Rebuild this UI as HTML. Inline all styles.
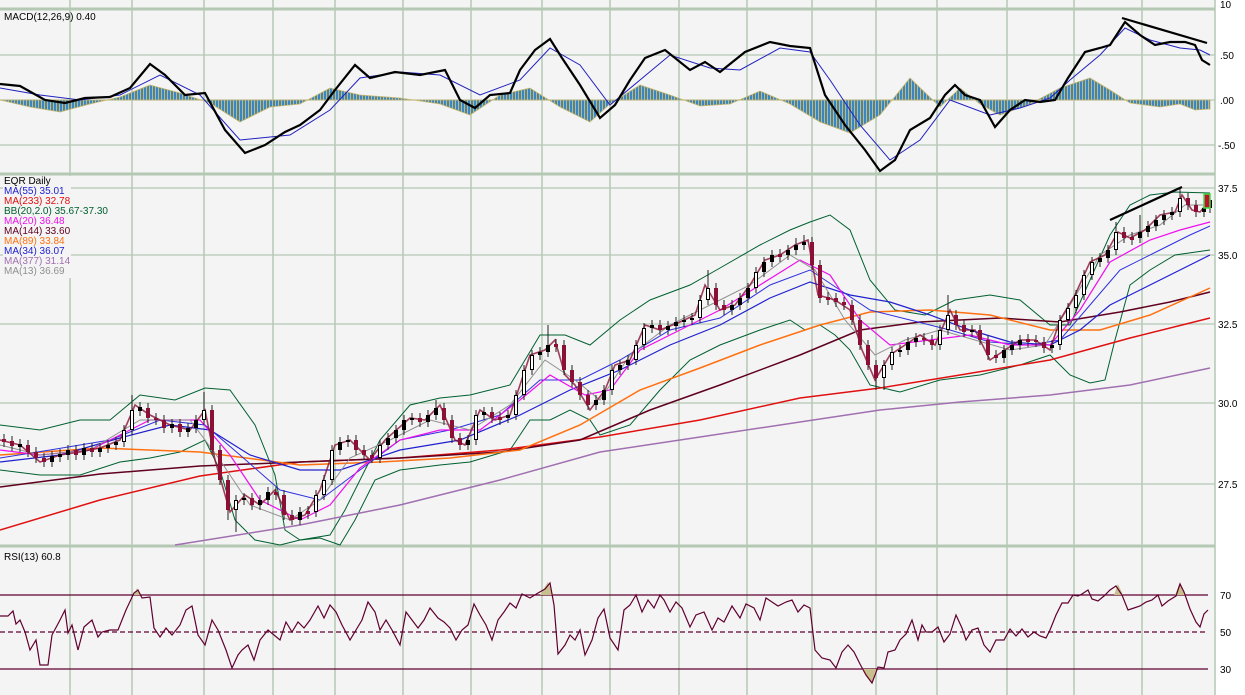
<!DOCTYPE html>
<html><head><meta charset="utf-8"><style>
html,body{margin:0;padding:0;background:#fff;width:1245px;height:695px;overflow:hidden}
svg{display:block}
text{font-family:"Liberation Sans",sans-serif;font-size:10px}
</style></head><body>
<svg width="1245" height="695" xmlns="http://www.w3.org/2000/svg">
<defs>
<pattern id="hp" width="3" height="10" patternUnits="userSpaceOnUse">
<rect x="0" y="0" width="2" height="10" fill="#3a86c0"/>
<rect x="2" y="0" width="1" height="10" fill="#c8b870"/>
</pattern>
</defs>
<rect x="0" y="0" width="1215" height="695" fill="#f4f4f4"/>
<rect x="1215" y="0" width="30" height="695" fill="#fff"/>
<g stroke="#b4c8b4" stroke-width="1.5">
<path d="M70,0V695M132,0V695M204,0V695M273,0V695M335,0V695M403,0V695M471,0V695M542,0V695M610,0V695M679,0V695M747,0V695M812,0V695M876,0V695M937,0V695M1007,0V695M1074,0V695M1142,0V695"/>
</g>
<g stroke="#b4c8b4" stroke-width="3">
<line x1="0" y1="9" x2="1215" y2="9"/>
<line x1="0" y1="174" x2="1215" y2="174"/>
<line x1="0" y1="546" x2="1215" y2="546"/>
</g>
<line x1="1215" y1="0" x2="1215" y2="695" stroke="#b4c8b4" stroke-width="1.5"/>
<g stroke="#b4c8b4" stroke-width="1.2">
<line x1="0" y1="55" x2="1215" y2="55"/>
<line x1="0" y1="100" x2="1215" y2="100"/>
<line x1="0" y1="145" x2="1215" y2="145"/>
<line x1="0" y1="188" x2="1215" y2="188"/>
<line x1="0" y1="255" x2="1215" y2="255"/>
<line x1="0" y1="324" x2="1215" y2="324"/>
<line x1="0" y1="403" x2="1215" y2="403"/>
<line x1="0" y1="484" x2="1215" y2="484"/>
</g>
<g fill="#000">
<text x="1220" y="8">10</text>
<text x="1220" y="59">.50</text>
<text x="1220" y="104">.00</text>
<text x="1218" y="149">-.50</text>
<text x="1218" y="192">37.5</text>
<text x="1218" y="259">35.0</text>
<text x="1218" y="328">32.5</text>
<text x="1218" y="407">30.0</text>
<text x="1218" y="488">27.5</text>
<text x="1220" y="599">70</text>
<text x="1220" y="636">50</text>
<text x="1220" y="673">30</text>
</g>

<!-- MACD histogram -->
<polygon fill="url(#hp)" stroke="#c8b870" stroke-width="0.8" points="0,100 30,107 60,112 90,104 120,97 150,85 180,93 210,103 240,122 270,107 300,104 330,88 360,95 400,98 440,104 470,115 500,95 530,88 560,107 590,122 610,104 640,85 670,95 700,106 730,104 760,91 790,104 820,122 850,133 880,115 910,78 940,107 960,88 980,104 1000,115 1030,104 1060,88 1090,78 1110,90 1130,103 1160,107 1180,104 1195,110 1210,109 1210,100"/>
<polyline fill="none" stroke="#2020c0" stroke-width="1" points="0,88 40,95 80,100 120,95 160,75 200,95 240,140 290,135 330,110 360,78 400,72 440,75 480,95 520,80 550,48 580,65 610,105 640,80 670,55 710,68 740,70 780,48 810,52 830,80 860,125 890,160 920,140 950,100 990,115 1020,108 1050,98 1070,80 1100,55 1125,28 1150,40 1180,48 1200,50 1210,55"/>
<polyline fill="none" stroke="#000" stroke-width="2.2" points="0,84 20,86 45,100 65,103 85,98 110,97 130,88 150,64 165,75 185,95 205,93 225,130 245,153 265,145 285,132 300,125 320,110 335,90 355,65 370,78 395,72 420,75 445,70 460,100 475,108 490,95 510,93 520,70 535,50 550,39 562,58 580,85 600,118 615,105 630,80 645,58 665,50 690,70 705,62 720,72 745,52 770,42 790,46 810,48 825,95 845,125 865,150 880,171 895,160 910,130 930,118 945,95 955,85 965,95 980,100 995,127 1010,110 1025,100 1040,102 1055,100 1068,78 1085,52 1100,48 1110,45 1125,22 1140,35 1155,45 1170,42 1185,42 1195,45 1202,60 1210,65"/>
<line x1="1122" y1="18" x2="1207" y2="43" stroke="#000" stroke-width="2.2"/>
<text x="4" y="20" fill="#000">MACD(12,26,9) 0.40</text>

<polyline fill="none" stroke="#006030" stroke-width="1" points="0,425 40,430 80,420 110,420 140,395 175,400 205,388 230,390 255,425 275,475 285,530 300,540 330,535 345,510 380,440 410,405 440,398 470,395 510,385 540,335 565,335 590,345 620,320 650,300 690,285 720,268 760,245 790,230 810,222 830,215 850,230 870,280 895,310 925,315 955,300 990,295 1020,300 1050,325 1070,325 1090,280 1110,235 1130,205 1150,195 1175,192 1210,193"/>
<polyline fill="none" stroke="#006030" stroke-width="1" points="0,470 40,475 80,475 120,462 150,458 180,452 205,440 220,470 235,520 255,540 280,545 300,540 320,538 340,545 355,520 375,480 400,470 440,465 470,462 510,450 530,420 550,420 570,410 590,420 600,435 630,425 660,390 690,360 720,345 760,330 790,320 805,330 820,325 835,335 850,350 870,385 900,392 940,380 980,375 1020,365 1050,355 1070,375 1090,383 1105,380 1115,340 1130,285 1150,270 1175,255 1210,250"/>
<polyline fill="none" stroke="#a070b0" stroke-width="1.5" points="175,545 300,525 400,505 500,480 600,452 700,437 800,422 880,410 960,402 1050,395 1130,385 1210,368"/>
<polyline fill="none" stroke="#e01010" stroke-width="1.5" points="0,530 100,500 200,476 300,462 400,458 500,450 600,437 700,420 800,398 880,388 960,375 1050,360 1130,338 1210,318"/>
<polyline fill="none" stroke="#600020" stroke-width="1.5" points="0,487 100,474 200,466 300,462 400,458 500,452 580,440 650,410 720,385 800,355 860,330 920,322 1000,318 1060,322 1120,312 1170,302 1210,292"/>
<polyline fill="none" stroke="#ff7010" stroke-width="1.5" points="0,455 100,448 200,452 300,465 380,462 450,458 520,450 580,425 640,390 700,368 760,345 820,325 870,312 930,310 990,315 1050,330 1100,330 1150,315 1210,288"/>
<polyline fill="none" stroke="#2020d0" stroke-width="1.2" points="0,462 60,455 120,438 170,425 210,430 250,455 300,470 340,470 400,450 460,440 520,415 570,390 620,370 670,345 720,325 770,298 810,282 850,295 890,302 930,315 970,330 1010,342 1050,345 1080,330 1110,305 1150,285 1180,270 1210,255"/>
<polyline fill="none" stroke="#3030e0" stroke-width="1" points="0,458 50,450 110,440 160,420 205,425 240,455 280,490 320,500 360,470 400,440 450,430 500,415 540,380 580,380 620,360 670,330 720,318 770,285 810,270 840,290 870,310 910,320 950,330 990,342 1030,345 1060,340 1090,305 1120,270 1160,250 1190,235 1210,226"/>
<polyline fill="none" stroke="#ee10ee" stroke-width="1.2" points="0,450 40,455 90,450 150,420 200,420 230,455 260,500 300,520 330,505 360,468 400,440 440,430 480,430 520,400 550,375 585,395 610,390 640,350 680,330 720,310 760,285 800,260 830,275 860,320 890,345 930,340 970,335 1010,345 1050,345 1080,310 1110,262 1150,240 1180,230 1210,222"/>
<polyline fill="none" stroke="#909090" stroke-width="1" points="0,445 40,455 90,450 140,420 190,420 220,460 250,505 290,520 320,500 350,458 390,440 430,420 470,430 510,405 545,360 575,380 600,400 630,355 670,325 710,305 750,285 790,255 815,270 845,320 875,355 905,340 940,330 975,340 1010,350 1045,345 1070,305 1100,255 1130,235 1160,225 1185,205 1210,205"/>

<!-- dense price trace -->
<polyline fill="none" stroke="#8b1035" stroke-width="1.6" opacity="0.8" points="0,440 20,445 40,462 60,455 80,452 100,448 120,440 135,405 150,415 170,425 190,430 205,410 215,460 230,512 245,495 260,505 275,490 290,520 305,515 320,490 335,445 350,440 370,460 385,440 410,418 425,420 440,405 455,440 465,445 480,410 495,420 510,415 520,385 530,355 545,350 555,340 565,375 575,385 590,410 605,390 615,365 630,360 645,325 660,330 680,322 695,315 705,285 720,310 735,305 750,285 765,260 780,255 795,245 808,240 818,295 835,300 850,310 862,350 875,380 890,355 905,345 920,335 935,345 950,310 960,330 975,330 990,360 1005,350 1020,340 1035,340 1050,350 1060,320 1075,295 1090,262 1105,255 1118,232 1130,238 1145,230 1160,215 1175,212 1182,195 1192,210 1200,212 1210,200"/>

<!-- candles: wicks -->
<path fill="none" stroke="#222" stroke-width="1" d="M4,434V447M12,436V451M28,440V457M36,447V463M44,453V467M76,445V460M92,443V457M148,403V423M156,413V425M164,415V433M180,419V437M212,405V455M220,445V485M228,475V520M252,493V510M276,487V500M284,490V520M292,510V525M308,506V519M356,435V455M364,445V460M372,450V463M420,413V427M444,403V425M452,415V443M460,433V450M492,407V423M500,412V425M556,339V352M564,340V375M572,365V387M580,377V400M588,390V410M660,320V335M716,283V310M724,300V315M780,249V262M812,237V270M820,260V303M828,292V305M836,293V307M844,297V310M852,300V325M860,315V350M868,340V370M876,360V390M924,333V345M932,335V350M956,310V330M964,320V337M980,325V345M988,335V360M996,350V363M1028,334V347M1036,335V347M1044,337V353M1124,227V243M1132,232V245M1188,193V210M1196,200V217M20,439V452M52,451V467M60,449V462M68,445V460M84,443V460M100,443V457M108,440V453M116,437V450M124,425V447M132,395V435M140,402V416M172,419V433M188,423V437M196,415V433M204,392V425M236,495V532M244,493V505M260,495V510M268,487V505M300,507V525M316,490V517M324,475V500M332,445V485M340,437V455M348,435V447M380,440V463M388,433V450M396,425V443M404,415V435M412,413V425M428,410V427M436,400V420M468,435V450M476,410V445M484,407V420M508,410V423M516,390V420M524,365V400M532,350V375M540,347V360M548,325V357M596,395V410M604,385V405M612,365V395M620,360V375M628,355V370M636,340V365M644,323V350M652,320V333M668,321V335M676,317V331M684,315V327M692,313V325M700,295V323M708,270V305M732,300V315M740,293V310M748,283V303M756,267V293M764,257V277M772,250V267M788,245V260M796,238V255M804,235V250M884,360V390M892,347V370M900,345V357M908,337V355M916,333V347M940,325V350M948,295V335M972,325V337M1004,345V363M1012,340V355M1020,335V350M1052,340V353M1060,315V350M1068,303V325M1076,290V313M1084,270V300M1092,257V280M1100,253V267M1108,245V263M1116,222V255M1140,215V243M1148,221V237M1156,215V231M1164,210V225M1172,207V220M1180,188V217M1204,203V217M1210,195V213"/>
<path fill="none" stroke="#8b1035" stroke-width="4" d="M4,439V442M12,441V446M28,445V452M36,452V458M44,458V462M76,450V455M92,448V452M148,408V418M156,418V420M164,420V428M180,424V432M212,410V450M220,450V480M228,480V510M252,498V505M276,492V495M284,495V515M292,515V520M308,511V514M356,440V450M364,450V455M372,455V458M420,418V422M444,408V420M452,420V438M460,438V445M492,412V418M500,417V420M556,344V347M564,345V370M572,370V382M580,382V395M588,395V405M660,325V330M716,288V305M724,305V310M780,254V257M812,242V265M820,265V298M828,297V300M836,298V302M844,302V305M852,305V320M860,320V345M868,345V365M876,365V378M924,338V340M932,340V345M956,315V325M964,325V332M980,330V340M988,340V355M996,355V358M1028,339V342M1036,340V342M1044,342V348M1124,232V238M1132,237V240M1188,198V205M1196,205V212"/>
<path fill="none" stroke="#000" stroke-width="4" d="M20,444V447M52,456V462M60,454V457M68,450V455M84,448V455M100,448V452M108,445V448M116,442V445M124,430V442M132,410V430M140,407V411M172,424V428M188,428V432M196,420V428M204,410V420M236,500V510M244,498V500M260,500V505M268,492V500M300,512V520M316,495V512M324,480V495M332,450V480M340,442V450M348,440V442M380,445V458M388,438V445M396,430V438M404,420V430M412,418V420M428,415V422M436,408V415M468,440V445M476,415V440M484,412V415M508,415V418M516,395V415M524,370V395M532,355V370M540,352V355M548,345V352M596,400V405M604,390V400M612,370V390M620,365V370M628,360V365M636,345V360M644,328V345M652,325V328M668,326V330M676,322V326M684,320V322M692,318V320M700,300V318M708,288V300M732,305V310M740,298V305M748,288V298M756,272V288M764,262V272M772,255V262M788,250V255M796,245V250M804,242V245M884,365V378M892,352V365M900,350V352M908,342V350M916,338V342M940,330V345M948,315V330M972,330V332M1004,350V358M1012,345V350M1020,340V345M1052,345V348M1060,320V345M1068,308V320M1076,295V308M1084,275V295M1092,262V275M1100,258V262M1108,250V258M1116,232V250M1140,232V238M1148,226V232M1156,220V226M1164,215V220M1172,212V215M1180,198V212M1204,208V212M1210,200V208"/>
<path fill="none" stroke="#fff" stroke-width="2" d="M124,431V441M132,411V429M204,411V419M236,501V509M316,496V511M324,481V494M332,451V479M380,446V457M476,416V439M516,396V414M524,371V394M532,356V369M612,371V389M636,346V359M644,329V344M700,301V317M708,289V299M756,273V287M884,366V377M892,353V364M940,331V344M948,316V329M1060,321V344M1068,309V319M1076,296V307M1084,276V294M1092,263V274M1116,233V249M1180,199V211"/>
<line x1="1110" y1="220" x2="1182" y2="187" stroke="#000" stroke-width="2.2"/>
<rect x="1204" y="194" width="6" height="14" fill="#c01030" stroke="#40e040" stroke-width="1.5"/>

<rect x="3" y="176" width="68" height="102" fill="#f4f4f4"/>
<g font-size="10">
<text x="4" y="184" fill="#000">EQR Daily</text>
<text x="4" y="194" fill="#2020d0">MA(55) 35.01</text>
<text x="4" y="204" fill="#e01010">MA(233) 32.78</text>
<text x="4" y="214" fill="#006030">BB(20,2.0) 35.67-37.30</text>
<text x="4" y="224" fill="#ee10ee">MA(20) 36.48</text>
<text x="4" y="234" fill="#600020">MA(144) 33.60</text>
<text x="4" y="244" fill="#ff7010">MA(89) 33.84</text>
<text x="4" y="254" fill="#2020d0">MA(34) 36.07</text>
<text x="4" y="264" fill="#a070b0">MA(377) 31.14</text>
<text x="4" y="274" fill="#909090">MA(13) 36.69</text>
</g>

<g stroke="#600030" stroke-width="1.3">
<line x1="0" y1="595" x2="1208" y2="595"/>
<line x1="0" y1="632" x2="1208" y2="632" stroke-dasharray="5,3"/>
<line x1="0" y1="669" x2="1208" y2="669"/>
</g>
<polygon fill="#c8c08c" points="134,595 137,588 140,595"/>
<polygon fill="#c8c08c" points="540,595 548,582 553,595"/>
<polygon fill="#c8c08c" points="862,669 872,683 876,669"/>
<polygon fill="#c8c08c" points="1114,595 1118,584 1123,595"/>
<polygon fill="#c8c08c" points="1175,595 1180,582 1185,595"/>
<polyline fill="none" stroke="#600030" stroke-width="1.2" points="0,616 8,616 13,611 16,624 20,620 25,632 30,650 36,640 40,665 48,665 52,635 60,620 65,610 68,633 72,625 78,650 84,627 92,620 98,637 102,632 110,630 118,630 126,610 134,593 138,590 142,598 150,597 154,628 160,637 166,628 172,635 180,625 186,610 192,606 198,635 205,645 212,620 218,630 226,650 232,668 238,655 242,650 248,645 254,660 260,640 268,630 274,635 280,640 286,622 292,632 298,622 304,628 310,620 318,606 324,618 330,605 336,612 342,625 350,640 356,630 362,620 368,602 375,612 380,630 386,620 392,630 400,645 406,612 412,620 418,628 424,620 430,608 438,618 444,622 450,628 456,640 462,630 468,625 474,604 480,615 486,625 492,640 498,620 504,612 510,603 516,608 522,594 530,598 538,593 545,589 550,583 554,605 558,654 565,645 570,635 575,640 580,630 585,655 592,640 598,618 604,609 610,638 618,650 624,610 630,605 636,595 642,612 648,600 654,608 660,595 664,600 670,612 676,602 682,608 690,627 696,615 704,612 712,630 718,618 724,622 732,606 740,618 746,604 754,608 760,620 766,598 772,602 778,606 786,602 792,600 798,612 804,605 810,608 815,650 822,658 830,660 836,668 842,652 848,645 854,652 860,664 866,675 872,683 878,667 884,668 888,652 895,650 900,640 906,634 912,620 918,640 922,625 926,632 932,632 938,627 944,642 950,634 956,615 962,628 966,640 972,630 978,628 984,645 990,652 996,640 1004,640 1010,629 1016,636 1022,629 1028,637 1034,632 1040,636 1046,638 1050,630 1056,615 1062,603 1068,603 1073,595 1078,596 1082,594 1088,590 1092,599 1098,601 1104,596 1110,590 1116,586 1122,595 1128,610 1134,608 1140,606 1146,602 1152,600 1158,595 1162,606 1168,601 1176,596 1180,584 1184,592 1190,609 1196,622 1200,627 1204,614 1208,610"/>
<text x="4" y="560" fill="#000">RSI(13) 60.8</text>
</svg>
</body></html>
